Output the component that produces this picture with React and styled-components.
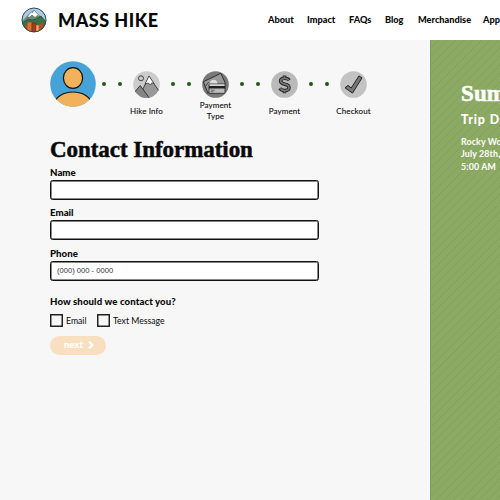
import React from 'react';
import styled, { createGlobalStyle } from 'styled-components';

const Global = createGlobalStyle`
  * { box-sizing: border-box; }
  html, body { margin: 0; padding: 0; background: #f7f7f7; overflow: hidden; }
  body { font-family: Lato, "Open Sans", sans-serif; color: #080808; }
`;

const Page = styled.div`
  width: 500px;
  height: 500px;
  display: flex;
  flex-direction: column;
  overflow: hidden;
`;

const Header = styled.header`
  flex: none;
  height: 40px;
  padding-left: 21px;
  display: flex;
  align-items: center;
  background: #fff;
`;

const Brand = styled.div`
  width: 247px;
  flex: none;
  display: flex;
  align-items: center;
  gap: 11px;
  font-size: 18px;
  line-height: 20px;
  font-weight: 900;
  letter-spacing: 0.5px;
  white-space: nowrap;
`;

const Nav = styled.nav`
  display: flex;
  gap: 15px;
`;

const NavLink = styled.a`
  flex: none;
  width: ${(p) => p.$width}px;
  font-size: 9.2px;
  line-height: 12px;
  font-weight: 900;
  white-space: nowrap;
`;

const Main = styled.div`
  flex: 1;
  display: flex;
`;

const Content = styled.main`
  width: 430px;
  flex: none;
  padding: 21px 0 0 50px;
  background: #f7f7f7;
`;

const Steps = styled.div`
  display: flex;
  height: 75px;
`;

const Avatar = styled.svg`
  width: 46px;
  height: 46px;
  flex: none;
`;

const Dots = styled.div`
  width: 32px;
  height: 46px;
  flex: none;
  display: flex;
  align-items: center;
  justify-content: center;
  gap: 12px;
  &::before, &::after {
    content: '';
    width: 4px;
    height: 4px;
    border-radius: 50%;
    background: #1d5a18;
  }
`;

const Step = styled.div`
  width: 37px;
  flex: none;
  padding-top: 10px;
  display: flex;
  flex-direction: column;
  align-items: center;
`;

const StepIcon = styled.svg`
  width: 27px;
  height: 27px;
  flex: none;
`;

const StepLabel = styled.div`
  height: 24px;
  margin-top: 1px;
  display: flex;
  align-items: center;
  text-align: center;
  white-space: pre;
  font-size: 8px;
  line-height: 11px;
  letter-spacing: 0.1px;
  -webkit-text-stroke: 0.1px #222;
`;

const Title = styled.h1`
  margin: 0 0 1px;
  height: 28px;
  font-family: "Liberation Serif", serif;
  font-size: 23px;
  line-height: 28px;
  font-weight: 700;
  letter-spacing: -0.05px;
  white-space: nowrap;
  -webkit-text-stroke: 0.5px #080808;
`;

const Form = styled.form`
  margin: 0;
  padding-top: 1px;
`;

const Field = styled.div`
  height: 40.3px;
`;

const Label = styled.label`
  display: block;
  height: 14px;
  font-size: 9.7px;
  line-height: 12px;
  font-weight: 900;
`;

const Input = styled.input`
  display: block;
  width: 269px;
  height: 20px;
  padding: 0 6px;
  border: 1px solid #111;
  border-radius: 2.5px;
  box-shadow: inset 0 0 0 0.5px #111;
  background: #fff;
  font-family: "Liberation Sans", sans-serif;
  font-size: 7.6px;
  outline: none;
  &::placeholder { color: #333; opacity: 1; }
`;

const Question = styled.div`
  margin-top: 9px;
  font-size: 9.6px;
  line-height: 12px;
  font-weight: 900;
  letter-spacing: 0.11px;
  white-space: nowrap;
`;

const Options = styled.div`
  margin-top: 6px;
  height: 14px;
  display: flex;
`;

const Option = styled.label`
  width: ${(p) => p.$width}px;
  display: flex;
  align-items: center;
  gap: 3px;
  font-size: 8.7px;
  line-height: 12px;
  white-space: nowrap;
`;

const Box = styled.span`
  width: 13px;
  height: 13px;
  flex: none;
  border: 1px solid #222;
  box-shadow: inset 0 0 0 0.5px #222;
`;

const NextButton = styled.button`
  margin: 8px 0 0;
  width: 56px;
  height: 19px;
  padding: 0 0 0 2px;
  display: flex;
  align-items: center;
  justify-content: center;
  gap: 5px;
  border: 0;
  border-radius: 10px;
  background: #f8dfc0;
  color: #fff;
  font-family: Lato, sans-serif;
  font-size: 9.5px;
  line-height: 12px;
  font-weight: 900;
`;

const Summary = styled.aside`
  flex: 1;
  min-width: 0;
  overflow: hidden;
  padding: 40px 0 0 30px;
  color: #fff;
  border-left: 1px solid #7b9c54;
  background: #8caa64 repeating-linear-gradient(135deg, #8caa64 0 4.6px, #84a25c 5.1px 5.5px, #8caa64 6px 6.1px);
`;

const SummaryTitle = styled.h2`
  margin: 0;
  font-family: "Liberation Serif", serif;
  font-size: 23px;
  line-height: 28px;
  letter-spacing: 0.1px;
  white-space: nowrap;
  -webkit-text-stroke: 0.5px #fff;
`;

const SummaryHeading = styled.h3`
  margin: 4px 0 8px;
  font-size: 12.4px;
  line-height: 16px;
  font-weight: 900;
  letter-spacing: 0.9px;
  white-space: nowrap;
`;

const SummaryLine = styled.div`
  font-size: 8.8px;
  line-height: 12.4px;
  font-weight: 700;
  letter-spacing: 0.15px;
  white-space: nowrap;
`;

const Logo = () => (
  <svg width="26" height="26" viewBox="0 0 26 26">
    <defs><clipPath id="logo"><circle cx="13" cy="13" r="12" /></clipPath></defs>
    <g clipPath="url(#logo)">
      <path fill="#a9cde6" d="M0 0h26v26H0z" />
      <path fill="#6b8f74" d="M0 15 8 7l5-4 7 7 6 5v11H0z" />
      <path fill="#fff" stroke="#48616b" strokeWidth=".6" d="m6 10 4-5 1.500.5L13 3l6 6.500-3-1-2 2-3-2.500-2 2z" />
      <path fill="#387348" stroke="#24472f" strokeWidth=".7" d="m0 17 7-5 4 1 4-1 5-3 6 7v10H0z" />
      <path fill="#d8742e" stroke="#6d3320" strokeWidth=".5" d="M6 15h5v11H6z" />
      <path fill="#a63a27" stroke="#59261c" strokeWidth=".5" d="M11 16h4v10h-4z" />
      <path fill="#edae42" stroke="#7d4a22" strokeWidth=".5" d="M15 18h3v8h-3z" />
      <path fill="#b44a2b" d="m18 18 4-3v11h-4zM2 19h4v7H2z" />
    </g>
    <circle cx="13" cy="13" r="12" fill="none" stroke="#34464e" />
  </svg>
);

const Person = () => (
  <Avatar viewBox="0 0 46 46">
    <defs><clipPath id="person"><circle cx="23" cy="23" r="22.8" /></clipPath></defs>
    <g clipPath="url(#person)">
      <path fill="#46a3d8" d="M0 0h46v46H0z" />
      <ellipse cx="23" cy="43.5" rx="18.5" ry="12.5" fill="#f1b25b" stroke="#111" strokeWidth="1.2" />
      <ellipse cx="23" cy="17" rx="9.6" ry="10.4" fill="#f1b25b" stroke="#111" strokeWidth="1.2" />
    </g>
  </Avatar>
);

const Mountains = () => (
  <StepIcon viewBox="0 0 27 27">
    <defs><clipPath id="hills"><circle cx="13.5" cy="13.5" r="13.3" /></clipPath></defs>
    <g clipPath="url(#hills)">
      <path fill="#ccc" d="M0 0h27v27H0z" />
      <path fill="#999" stroke="#222" strokeWidth=".8" d="M8 22 16 5.5 28 23v5H8z" />
      <path fill="#fff" stroke="#222" strokeWidth=".7" d="m12 13 4-8 5 7.5-2.2-.6-1.4 2.1-2-2z" />
      <path fill="#858585" stroke="#222" strokeWidth=".8" d="m0 23 7.2-8.5L17 28H0z" />
    </g>
    <circle cx="8" cy="7.3" r="2.5" fill="#ccc" stroke="#222" strokeWidth=".8" />
  </StepIcon>
);

const Cards = () => (
  <StepIcon viewBox="0 0 27 27">
    <circle cx="13.5" cy="13.5" r="13.3" fill="#797979" />
    <path d="M1.4 10.7 18.8 2.3 23 11.4 22 21 5.8 22z" fill="#999" stroke="#222" strokeWidth=".9" strokeLinejoin="round" />
    <path d="m3.6 15.3 3-4.2" stroke="#333" strokeWidth=".8" />
    <circle cx="11.7" cy="12.3" r="3.6" fill="#ddd" />
    <rect x="7" y="13" width="16" height="9.4" rx="1" fill="#bcbcbc" stroke="#222" strokeWidth=".8" />
    <path d="M7 15h16v2.5H7z" fill="#222" />
    <path d="M7.5 14h15" stroke="#eee" strokeWidth="1" />
    <path d="M8.8 19.2h4M8.8 20.8h2.5" stroke="#444" strokeWidth=".7" />
  </StepIcon>
);

const Dollar = () => (
  <StepIcon viewBox="0 0 27 27">
    <circle cx="13.5" cy="13.5" r="13.3" fill="#bababa" />
    <g fill="none">
      <path d="M18.2 9.300c-1-1.400-2.700-2-4.600-2-2.600 0-4 1.100-4 2.800 0 2 1.800 2.700 4.200 3.200 2.500.500 4.200 1.300 4.200 3.300 0 1.800-1.600 3-4.200 3-2.100 0-3.900-.700-5-2.300M13.500 4.500v3M13.500 19v3.200" stroke="#222" strokeWidth="3.500" />
      <path d="M17.6 9.100c-1-1.200-2.300-1.700-4-1.700-2.400 0-3.900 1-3.900 2.700 0 1.800 1.800 2.600 4.100 3.100 2.500.500 4.200 1.400 4.200 3.400 0 1.800-1.700 3-4.200 3-2 0-3.500-.700-4.500-2.100M13.500 5.200v2.200M13.500 19.500v2" stroke="#777" strokeWidth="1.700" />
    </g>
  </StepIcon>
);

const Tick = () => (
  <StepIcon viewBox="0 0 27 27">
    <circle cx="13.5" cy="13.5" r="13.3" fill="#c3c3c3" />
    <path d="m5 16.800 3-2.400 3.200 2.600L19 4.900l3 2-9.500 15.200z" fill="#777" stroke="#222" strokeWidth="1" strokeLinejoin="round" />
  </StepIcon>
);

const steps = [
  { label: 'Hike Info', icon: Mountains },
  { label: 'Payment\nType', icon: Cards },
  { label: 'Payment', icon: Dollar },
  { label: 'Checkout', icon: Tick },
];

const links = [
  ['About', 24], ['Impact', 27], ['FAQs', 21], ['Blog', 18], ['Merchandise', 50], ['Apparel', 34],
];

export default function App() {
  return (
    <Page>
      <Global />
      <Header>
        <Brand><Logo />MASS HIKE</Brand>
        <Nav>
          {links.map(([text, width]) => <NavLink key={text} $width={width}>{text}</NavLink>)}
        </Nav>
      </Header>
      <Main>
        <Content>
          <Steps>
            <Person />
            {steps.map(({ label, icon: Icon }) => (
              <React.Fragment key={label}>
                <Dots />
                <Step><Icon /><StepLabel>{label}</StepLabel></Step>
              </React.Fragment>
            ))}
          </Steps>
          <Title>Contact Information</Title>
          <Form>
            <Field><Label>Name</Label><Input /></Field>
            <Field><Label>Email</Label><Input /></Field>
            <Field><Label>Phone</Label><Input placeholder="(000) 000 - 0000" /></Field>
            <Question>How should we contact you?</Question>
            <Options>
              <Option $width={47}><Box />Email</Option>
              <Option $width={80}><Box />Text Message</Option>
            </Options>
            <NextButton type="button">
              next
              <svg width="6" height="8" viewBox="0 0 6 8"><path d="m1 .6 3.400 3.400L1 7.400" fill="none" stroke="#fff" strokeWidth="2" /></svg>
            </NextButton>
          </Form>
        </Content>
        <Summary>
          <SummaryTitle>Summary</SummaryTitle>
          <SummaryHeading>Trip Details</SummaryHeading>
          <SummaryLine>Rocky Woods</SummaryLine>
          <SummaryLine>July 28th, 2021</SummaryLine>
          <SummaryLine>5:00 AM</SummaryLine>
        </Summary>
      </Main>
    </Page>
  );
}
